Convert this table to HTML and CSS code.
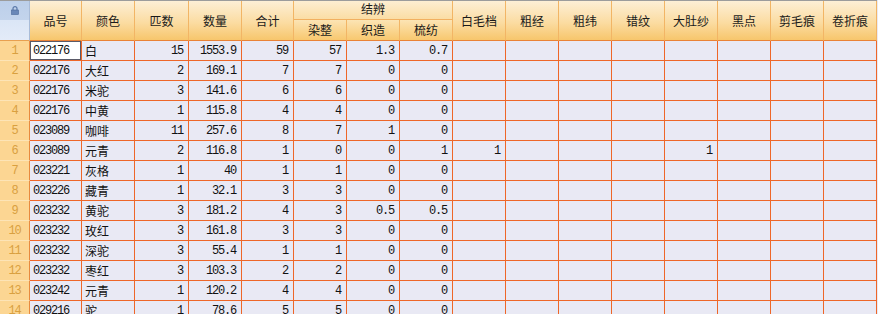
FILE: index.html
```html
<!DOCTYPE html>
<html lang="zh-CN">
<head>
<meta charset="utf-8">
<title>结辨统计</title>
<link rel="stylesheet" href="styles.css">
</head>
<body>
<div class="grid">
  <div class="corner span2"><svg class="lock" width="8" height="9" viewBox="0 0 8 9"><path d="M2 4V2.6a2 2 0 0 1 4 0V4" fill="none" stroke="#5a78a8" stroke-width="1.2"/><rect x="0.5" y="4" width="7" height="4.5" fill="#6a88b8" stroke="#4a6898" stroke-width="0.6"/></svg></div>
  <div class="hd span2">品号</div>
  <div class="hd span2">颜色</div>
  <div class="hd span2">匹数</div>
  <div class="hd span2">数量</div>
  <div class="hd span2">合计</div>
  <div class="hd grp">结辨</div>
  <div class="hd span2">白毛档</div>
  <div class="hd span2">粗经</div>
  <div class="hd span2">粗纬</div>
  <div class="hd span2">错纹</div>
  <div class="hd span2">大肚纱</div>
  <div class="hd span2">黑点</div>
  <div class="hd span2">剪毛痕</div>
  <div class="hd span2 last">卷折痕</div>
  <div class="hd sub">染整</div>
  <div class="hd sub">织造</div>
  <div class="hd sub">梳纺</div>

  <div class="rh">1</div><div class="c code sel">022176</div><div class="c t">白</div><div class="c n">15</div><div class="c n">1553.9</div><div class="c n">59</div><div class="c n">57</div><div class="c n">1.3</div><div class="c n">0.7</div><div class="c"></div><div class="c"></div><div class="c"></div><div class="c"></div><div class="c"></div><div class="c"></div><div class="c"></div><div class="c"></div>
  <div class="rh">2</div><div class="c code">022176</div><div class="c t">大红</div><div class="c n">2</div><div class="c n">169.1</div><div class="c n">7</div><div class="c n">7</div><div class="c n">0</div><div class="c n">0</div><div class="c"></div><div class="c"></div><div class="c"></div><div class="c"></div><div class="c"></div><div class="c"></div><div class="c"></div><div class="c"></div>
  <div class="rh">3</div><div class="c code">022176</div><div class="c t">米驼</div><div class="c n">3</div><div class="c n">141.6</div><div class="c n">6</div><div class="c n">6</div><div class="c n">0</div><div class="c n">0</div><div class="c"></div><div class="c"></div><div class="c"></div><div class="c"></div><div class="c"></div><div class="c"></div><div class="c"></div><div class="c"></div>
  <div class="rh">4</div><div class="c code">022176</div><div class="c t">中黄</div><div class="c n">1</div><div class="c n">115.8</div><div class="c n">4</div><div class="c n">4</div><div class="c n">0</div><div class="c n">0</div><div class="c"></div><div class="c"></div><div class="c"></div><div class="c"></div><div class="c"></div><div class="c"></div><div class="c"></div><div class="c"></div>
  <div class="rh">5</div><div class="c code">023089</div><div class="c t">咖啡</div><div class="c n">11</div><div class="c n">257.6</div><div class="c n">8</div><div class="c n">7</div><div class="c n">1</div><div class="c n">0</div><div class="c"></div><div class="c"></div><div class="c"></div><div class="c"></div><div class="c"></div><div class="c"></div><div class="c"></div><div class="c"></div>
  <div class="rh">6</div><div class="c code">023089</div><div class="c t">元青</div><div class="c n">2</div><div class="c n">116.8</div><div class="c n">1</div><div class="c n">0</div><div class="c n">0</div><div class="c n">1</div><div class="c n">1</div><div class="c"></div><div class="c"></div><div class="c"></div><div class="c n">1</div><div class="c"></div><div class="c"></div><div class="c"></div>
  <div class="rh">7</div><div class="c code">023221</div><div class="c t">灰格</div><div class="c n">1</div><div class="c n">40</div><div class="c n">1</div><div class="c n">1</div><div class="c n">0</div><div class="c n">0</div><div class="c"></div><div class="c"></div><div class="c"></div><div class="c"></div><div class="c"></div><div class="c"></div><div class="c"></div><div class="c"></div>
  <div class="rh">8</div><div class="c code">023226</div><div class="c t">藏青</div><div class="c n">1</div><div class="c n">32.1</div><div class="c n">3</div><div class="c n">3</div><div class="c n">0</div><div class="c n">0</div><div class="c"></div><div class="c"></div><div class="c"></div><div class="c"></div><div class="c"></div><div class="c"></div><div class="c"></div><div class="c"></div>
  <div class="rh">9</div><div class="c code">023232</div><div class="c t">黄驼</div><div class="c n">3</div><div class="c n">181.2</div><div class="c n">4</div><div class="c n">3</div><div class="c n">0.5</div><div class="c n">0.5</div><div class="c"></div><div class="c"></div><div class="c"></div><div class="c"></div><div class="c"></div><div class="c"></div><div class="c"></div><div class="c"></div>
  <div class="rh">10</div><div class="c code">023232</div><div class="c t">玫红</div><div class="c n">3</div><div class="c n">161.8</div><div class="c n">3</div><div class="c n">3</div><div class="c n">0</div><div class="c n">0</div><div class="c"></div><div class="c"></div><div class="c"></div><div class="c"></div><div class="c"></div><div class="c"></div><div class="c"></div><div class="c"></div>
  <div class="rh">11</div><div class="c code">023232</div><div class="c t">深驼</div><div class="c n">3</div><div class="c n">55.4</div><div class="c n">1</div><div class="c n">1</div><div class="c n">0</div><div class="c n">0</div><div class="c"></div><div class="c"></div><div class="c"></div><div class="c"></div><div class="c"></div><div class="c"></div><div class="c"></div><div class="c"></div>
  <div class="rh">12</div><div class="c code">023232</div><div class="c t">枣红</div><div class="c n">3</div><div class="c n">103.3</div><div class="c n">2</div><div class="c n">2</div><div class="c n">0</div><div class="c n">0</div><div class="c"></div><div class="c"></div><div class="c"></div><div class="c"></div><div class="c"></div><div class="c"></div><div class="c"></div><div class="c"></div>
  <div class="rh">13</div><div class="c code">023242</div><div class="c t">元青</div><div class="c n">1</div><div class="c n">120.2</div><div class="c n">4</div><div class="c n">4</div><div class="c n">0</div><div class="c n">0</div><div class="c"></div><div class="c"></div><div class="c"></div><div class="c"></div><div class="c"></div><div class="c"></div><div class="c"></div><div class="c"></div>
  <div class="rh">14</div><div class="c code">029216</div><div class="c t">驼</div><div class="c n">1</div><div class="c n">78.6</div><div class="c n">5</div><div class="c n">5</div><div class="c n">0</div><div class="c n">0</div><div class="c"></div><div class="c"></div><div class="c"></div><div class="c"></div><div class="c"></div><div class="c"></div><div class="c"></div><div class="c"></div>
</div>
</body>
</html>
```

FILE: styles.css
```css
html, body {
  margin: 0;
  padding: 0;
  background: #e9e9f3;
  overflow: hidden;
}

.grid {
  display: grid;
  grid-template-columns: 30px 52px 53px 54px 53px 52px repeat(11, 53px);
  grid-template-rows: 19px 21px repeat(14, 20px);
  border-top: 1px solid #9c9c9c;
  width: max-content;
  font-family: "Noto Sans CJK SC", "Noto Sans", sans-serif;
  font-size: 12px;
  color: #111;
}

.grid > div {
  box-sizing: border-box;
  display: flex;
  align-items: center;
  white-space: nowrap;
  overflow: hidden;
}

.span2 {
  grid-row: span 2;
}

.corner {
  justify-content: center;
  align-items: flex-start !important;
  padding-top: 5px;
  background: linear-gradient(to bottom, #bccfea 0, #c3d4ec 48%, #dbe6f6 50%, #e3ebf8 100%);
  border-right: 1px solid #a9bcd8;
  border-bottom: 1px solid #e8a050;
}

.lock {
  display: block;
}

.hd {
  justify-content: center;
  background: linear-gradient(to bottom, #fdefd6 0, #fbdca2 55%, #f7c66c 100%);
  border-right: 1px solid #f2b565;
  border-bottom: 1px solid #ea8236;
  color: #1a1a1a;
  line-height: 1;
}

.hd.grp {
  grid-column: span 3;
  background: linear-gradient(to bottom, #fdeed2 0, #fbdda4 100%);
  border-bottom: 1px solid #f2b060;
  align-items: flex-start !important;
  padding-top: 2px;
}

.hd.sub {
  background: linear-gradient(to bottom, #fce4b4 0, #f8c86f 100%);
}

.rh {
  justify-content: center;
  background: #fcd693;
  border-right: 1px solid #e88a3e;
  border-bottom: 1px solid #fde4b6;
  color: #d9a040;
  font-family: "Liberation Mono", "DejaVu Sans Mono", monospace;
  font-size: 12px;
  letter-spacing: -1.2px;
}

.c {
  background: #e9e9f4;
  border-right: 1px solid #ee6628;
  border-bottom: 1px solid #ee6628;
}

.c.t {
  padding-left: 3px;
}

.c.code {
  padding-left: 3px;
  font-family: "Liberation Mono", "DejaVu Sans Mono", monospace;
  font-size: 12px;
  letter-spacing: -1.2px;
}

.c.n {
  justify-content: flex-end;
  padding-right: 5px;
  font-family: "Liberation Mono", "DejaVu Sans Mono", monospace;
  font-size: 12px;
  letter-spacing: -1.2px;
}

.c.sel {
  background: #ffffff;
  box-shadow: inset 0 0 0 1px #5a5a68;
}
```
